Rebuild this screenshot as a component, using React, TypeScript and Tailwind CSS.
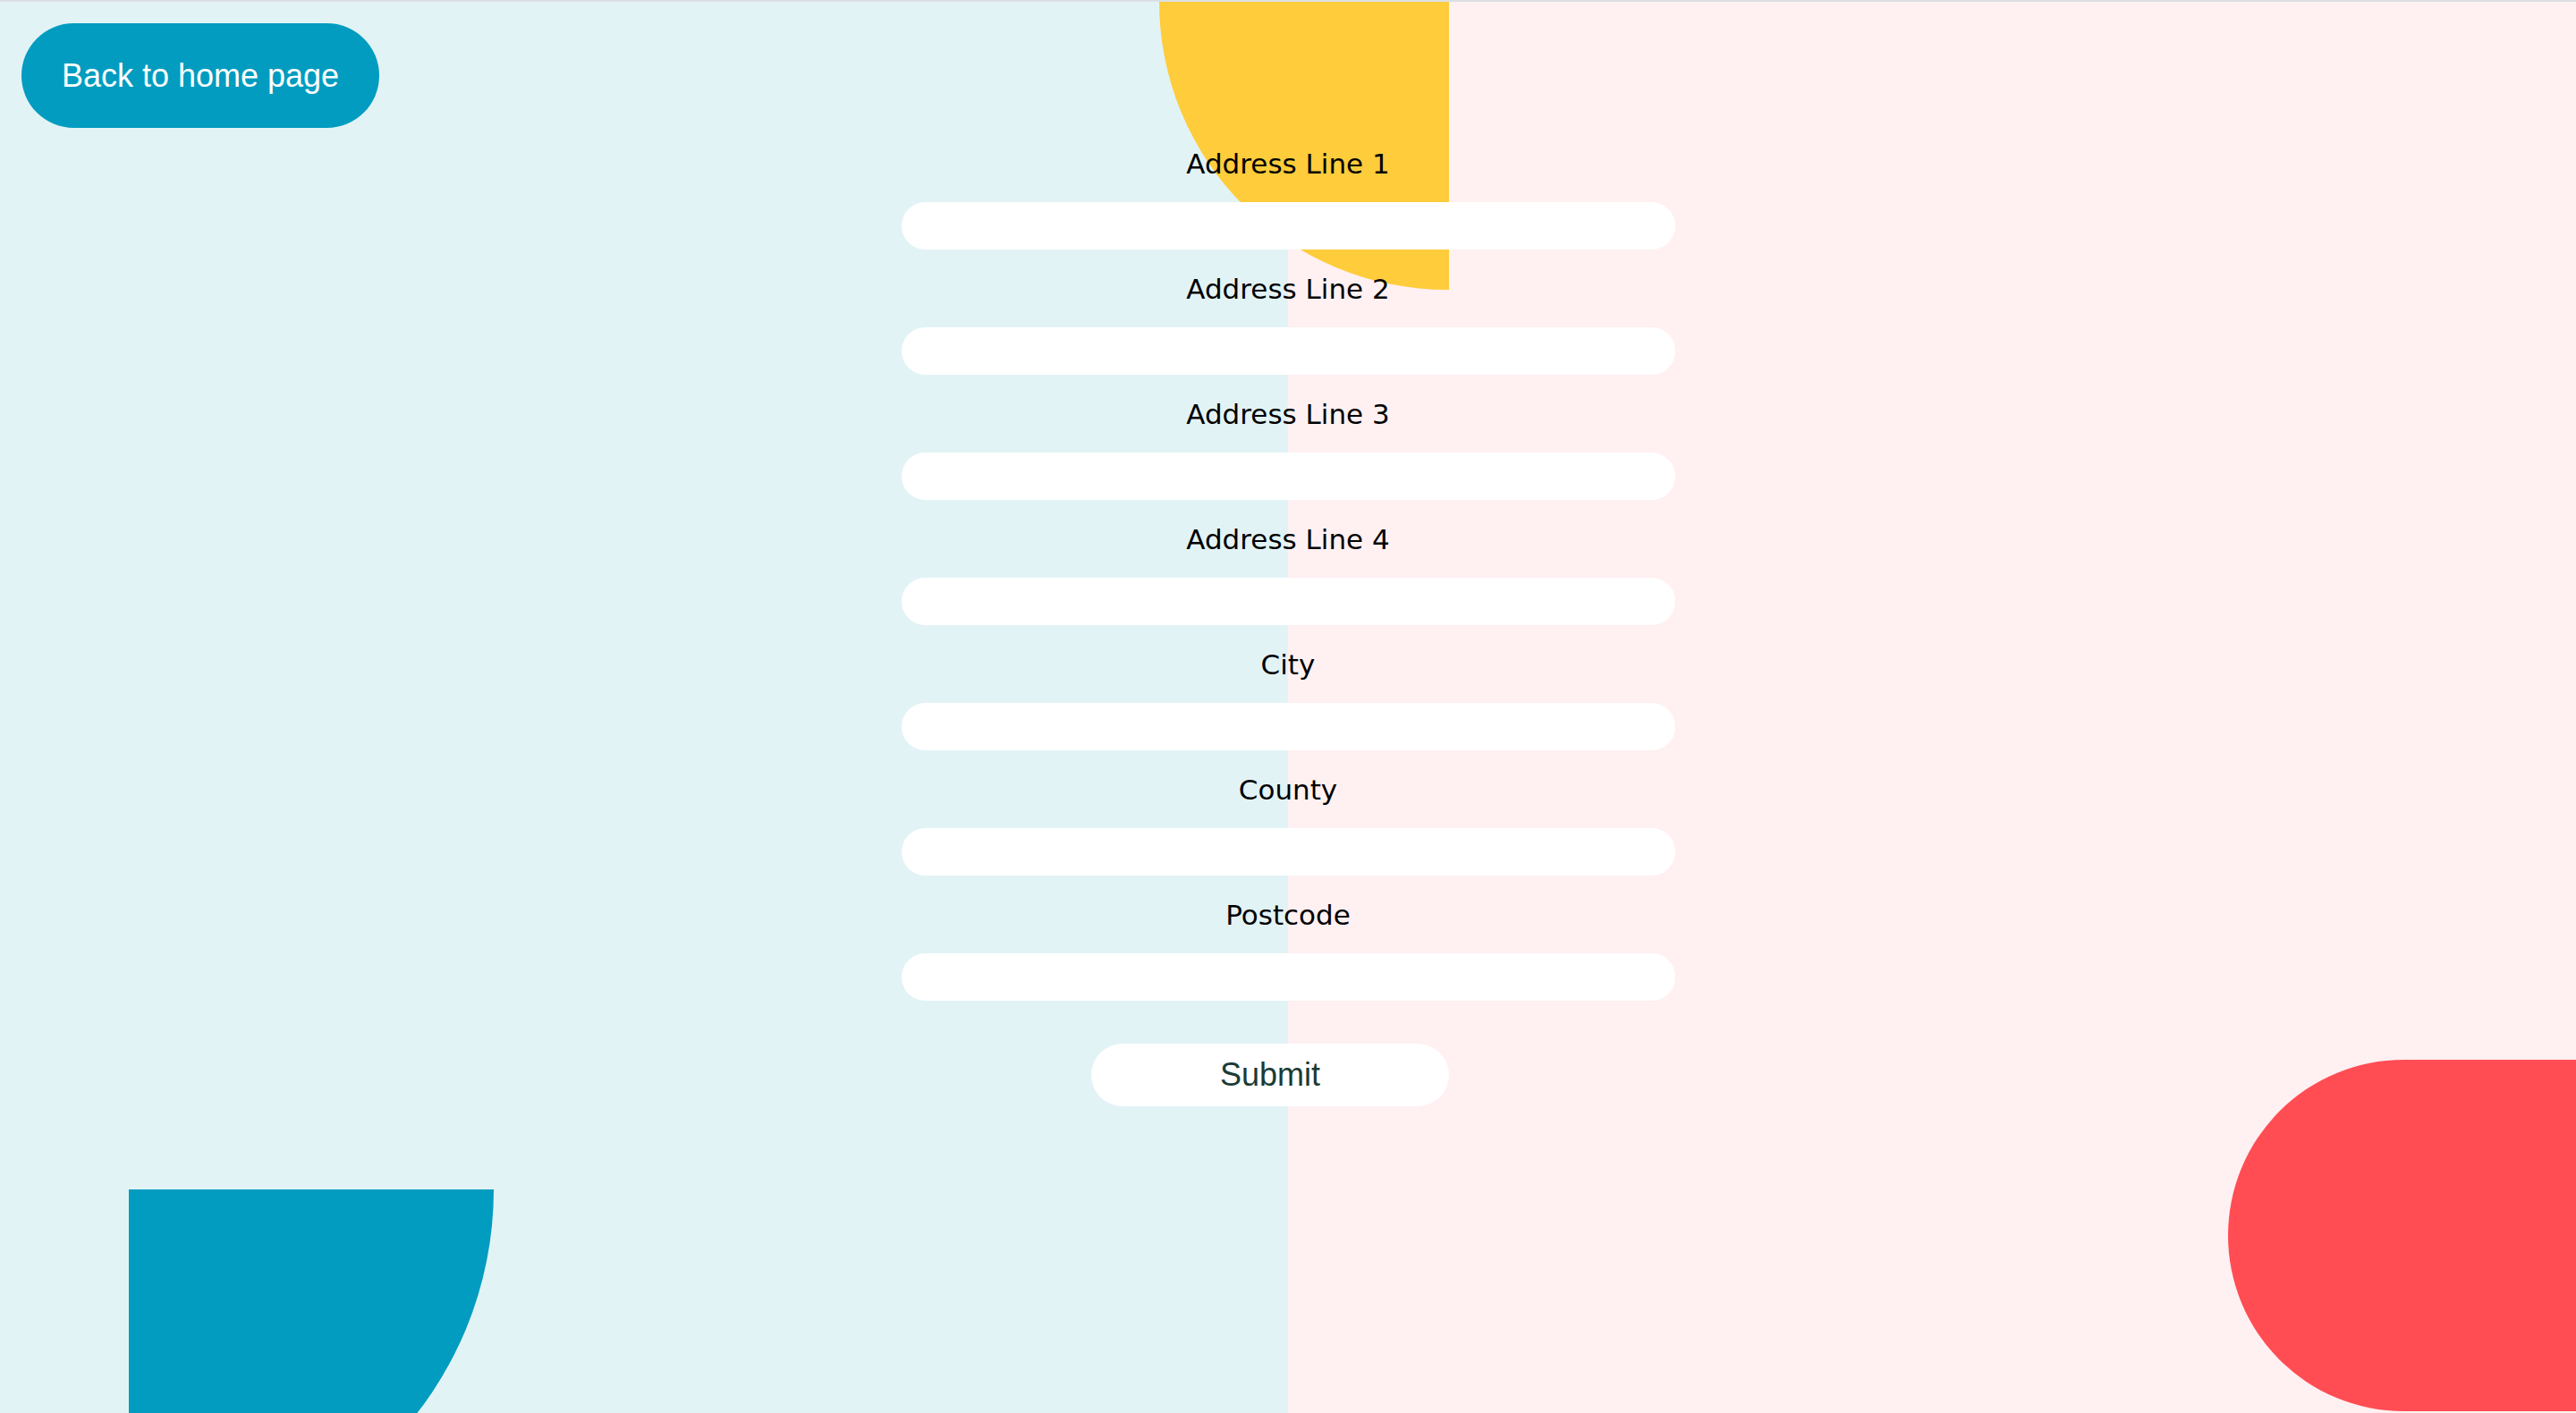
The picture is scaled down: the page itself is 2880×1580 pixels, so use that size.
import React from 'react';

const fields = ['Address Line 1', 'Address Line 2', 'Address Line 3', 'Address Line 4', 'City', 'County', 'Postcode'];

const App: React.FC = () => {
    return (
        <div className="relative h-[1580px] w-full overflow-hidden border-t-2 border-[#dcdfe2] bg-[linear-gradient(to_right,#e2f3f6_50%,#fff0f2_50%)]">
            {/* decorative shapes */}
            <div className="absolute left-[1296px] top-0 h-[322px] w-[324px] rounded-bl-full bg-[#ffcc3b]" />
            <div className="absolute left-[144px] top-[1328px] h-[408px] w-[408px] rounded-br-full bg-[#019cc0]" />
            <div className="absolute left-[2491px] top-[1183px] h-[393px] w-[389px] rounded-l-full bg-[#ff4d53]" />

            <div className="relative z-10 flex flex-col px-[24px] pt-[24px]">
                <button className="flex h-[117px] w-[400px] items-center justify-center self-start rounded-full bg-[#019cc0] font-['Liberation_Sans',Arial,sans-serif] text-[36px] text-white">
                    Back to home page
                </button>

                <form className="mx-auto mt-[21px] flex w-[865px] flex-col items-center" onSubmit={(e) => e.preventDefault()}>
                    {fields.map((f) => (
                        <div key={f} className="flex w-full flex-col items-center">
                            <label className="h-[36px] font-['DejaVu_Sans',sans-serif] text-[31px] leading-[39px] text-black">{f}</label>
                            <input type="text" className="mb-[25px] mt-[26px] h-[53px] w-full rounded-[27px] bg-white px-[20px] outline-none" />
                        </div>
                    ))}
                    <button type="submit" className="mr-[40px] mt-[23px] h-[70px] w-[400px] rounded-full bg-white font-['Liberation_Sans',Arial,sans-serif] text-[36px] text-[#1b3b36]">
                        Submit
                    </button>
                </form>
            </div>
        </div>
    );
};

export default App;
